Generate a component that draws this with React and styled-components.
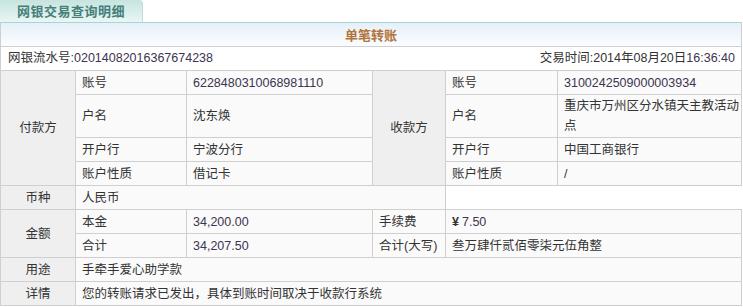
import React from "react";
import styled, { createGlobalStyle } from "styled-components";

const GlobalStyle = createGlobalStyle`
  body {
    margin: 0;
    background: #fff;
    font-family: "Liberation Sans", "Noto Sans CJK SC", sans-serif;
    font-size: 12.5px;
    color: #333;
  }
`;

const Page = styled.div`
  width: 742px;
`;

const TabBar = styled.div`
  display: flex;
  height: 22px;
`;

const Tab = styled.div`
  width: 125px;
  padding-left: 17px;
  line-height: 22px;
  font-family: "Noto Sans CJK SC", sans-serif;
  font-size: 13px;
  font-weight: bold;
  letter-spacing: 0.5px;
  color: #457f7a;
  background: linear-gradient(#c6e4df, #eaf6f4);
  border-right: 1px solid #c3dcd9;
  border-top-right-radius: 4px;
`;

const Title = styled.div`
  height: 23px;
  line-height: 23px;
  text-align: center;
  font-family: "Noto Sans CJK SC", sans-serif;
  font-size: 13px;
  font-weight: bold;
  color: #b3743a;
  background: linear-gradient(#e5f0f8, #fbfdff);
  border: 1px solid #cfcfcf;
  border-top-color: #a7d5d4;
`;

const MetaRow = styled.div`
  display: flex;
  justify-content: space-between;
  height: 23px;
  line-height: 23px;
  padding: 0 6px 0 7px;
  border-left: 1px solid #cfcfcf;
  border-right: 1px solid #cfcfcf;
`;

const Table = styled.table`
  width: 742px;
  table-layout: fixed;
  border-collapse: collapse;
`;

const Cell = styled.td`
  height: 21px;
  padding: 1px 2px 1px 6px;
  line-height: 20px;
  border: 1px solid #cfcfcf;
  background: ${(p) => (p.$head ? "#efefef" : "#fafafa")};
  text-align: ${(p) => (p.$head ? "center" : "left")};
  vertical-align: middle;
  ${(p) => (p.$head ? "padding-left: 2px;" : "")}
`;

const Blank = styled.td`
  background: #fff;
  border-right: hidden;
`;

const Num = styled.span`
  color: #3d3450;
`;

const Yen = styled.span`
  font-weight: bold;
  margin-right: 3px;
`;

const party = [
  ["账号", <Num>6228480310068981110</Num>, "账号", <Num>3100242509000003934</Num>],
  ["户名", "沈东焕", "户名", "重庆市万州区分水镇天主教活动点"],
  ["开户行", "宁波分行", "开户行", "中国工商银行"],
  ["账户性质", "借记卡", "账户性质", "/"],
];

export default function App() {
  return (
    <Page>
      <GlobalStyle />
      <TabBar>
        <Tab>网银交易查询明细</Tab>
      </TabBar>
      <Title>单笔转账</Title>
      <MetaRow>
        <span>
          网银流水号:<Num>02014082016367674238</Num>
        </span>
        <span>
          交易时间:2014年08月20日<Num>16:36:40</Num>
        </span>
      </MetaRow>
      <Table>
        <colgroup>
          <col style={{ width: 75 }} />
          <col style={{ width: 111 }} />
          <col style={{ width: 186 }} />
          <col style={{ width: 73 }} />
          <col style={{ width: 112 }} />
          <col style={{ width: 184 }} />
        </colgroup>
        <tbody>
          {party.map((r, i) => (
            <tr key={i}>
              {i === 0 && (
                <Cell $head rowSpan={4}>
                  付款方
                </Cell>
              )}
              <Cell>{r[0]}</Cell>
              <Cell>{r[1]}</Cell>
              {i === 0 && (
                <Cell $head rowSpan={4}>
                  收款方
                </Cell>
              )}
              <Cell>{r[2]}</Cell>
              <Cell>{r[3]}</Cell>
            </tr>
          ))}
          <tr>
            <Cell $head>币种</Cell>
            <Cell colSpan={3}>人民币</Cell>
            <Blank colSpan={2} />
          </tr>
          <tr>
            <Cell $head rowSpan={2}>
              金额
            </Cell>
            <Cell>本金</Cell>
            <Cell>
              <Num>34,200.00</Num>
            </Cell>
            <Cell>手续费</Cell>
            <Cell colSpan={2}>
              <Yen>¥</Yen>
              <Num>7.50</Num>
            </Cell>
          </tr>
          <tr>
            <Cell>合计</Cell>
            <Cell>
              <Num>34,207.50</Num>
            </Cell>
            <Cell>合计(大写)</Cell>
            <Cell colSpan={2}>叁万肆仟贰佰零柒元伍角整</Cell>
          </tr>
          <tr>
            <Cell $head>用途</Cell>
            <Cell colSpan={5}>手牵手爱心助学款</Cell>
          </tr>
          <tr>
            <Cell $head>详情</Cell>
            <Cell colSpan={5}>您的转账请求已发出，具体到账时间取决于收款行系统</Cell>
          </tr>
        </tbody>
      </Table>
    </Page>
  );
}
